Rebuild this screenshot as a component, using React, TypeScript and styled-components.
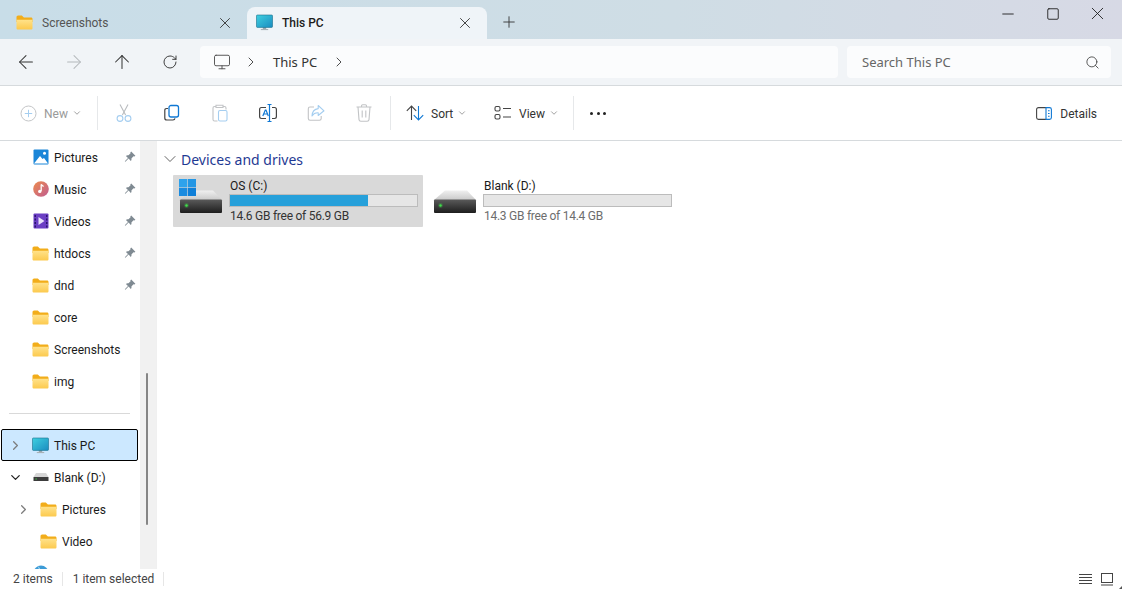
import styled, { createGlobalStyle } from "styled-components";
import { FC, ReactNode } from "react";
import {
  ArrowLeft,
  ArrowRight,
  ArrowUp,
  ChevronDown,
  ChevronRight,
  Minus,
  Monitor,
  Plus,
  RotateCw,
  Search,
  Square,
  X,
} from "lucide-react";

const GlobalStyle = createGlobalStyle`
  html, body {
    margin: 0;
    padding: 0;
    height: 100%;
    background: #fff;
    overflow: hidden;
  }
  body {
    font-family: Roboto, "Noto Sans", "Liberation Sans", sans-serif;
    font-size: 12px;
    color: #1a1a1a;
  }
`;

const FolderIcon: FC = () => (
  <svg width="17" height="15" viewBox="0 0 17 15">
    <path d="M0.5 2.2C0.5 1.3 1.2 0.5 2.1 0.5H5.8L7.9 2.5H15C16 2.5 16.5 3.2 16.5 4V7H0.5Z" fill="#f2ad1a" />
    <path d="M0.5 4.8H16.5V13.2C16.5 14 15.9 14.6 15.1 14.6H1.9C1.1 14.6 0.5 14 0.5 13.2Z" fill="url(#folder-front)" />
  </svg>
);

const MonitorIcon: FC = () => (
  <svg width="17" height="17" viewBox="0 0 17 17">
    <rect x="6.8" y="13" width="3.4" height="2.4" fill="#9aa6ad" />
    <rect x="4.8" y="15" width="7.4" height="1.1" fill="#a8b1b6" />
    <rect x="0.5" y="1" width="16" height="12.4" rx="0.8" fill="url(#monitor-screen)" stroke="#1a6f8c" strokeWidth="0.6" />
  </svg>
);

const PicturesIcon: FC = () => (
  <svg width="16" height="16" viewBox="0 0 16 16">
    <rect x="0.5" y="0.5" width="15" height="15" rx="1" fill="#1b86d8" />
    <circle cx="11.5" cy="4.2" r="1.5" fill="#fff" />
    <path d="M1 14.5L7 7L9.5 10L11 9L15 14.5Z" fill="#fff" />
  </svg>
);

const MusicIcon: FC = () => (
  <svg width="16" height="16" viewBox="0 0 16 16">
    <circle cx="8" cy="8" r="7.8" fill="url(#music-disc)" />
    <path d="M8.2 3.6V10" stroke="#fff" strokeWidth="1.3" fill="none" />
    <path d="M8.2 3.4C9 4.6 10.2 4.8 10.6 5.6" stroke="#fff" strokeWidth="1.2" fill="none" />
    <circle cx="6.8" cy="10.4" r="1.7" fill="#fff" />
  </svg>
);

const VideosIcon: FC = () => (
  <svg width="16" height="16" viewBox="0 0 16 16">
    <rect x="0.5" y="0.5" width="15" height="15" rx="1" fill="#6b3fc4" />
    <path d="M1.5 2H3V4H1.5ZM1.5 5.5H3V7.5H1.5ZM1.5 9H3V11H1.5ZM1.5 12.5H3V14.5H1.5ZM13 2H14.5V4H13ZM13 5.5H14.5V7.5H13ZM13 9H14.5V11H13ZM13 12.5H14.5V14.5H13Z" fill="#2c1570" />
    <path d="M5.5 4L11.5 8L5.5 12Z" fill="#e9e2fb" />
  </svg>
);

const NetworkIcon: FC = () => (
  <svg width="16" height="16" viewBox="0 0 16 16">
    <circle cx="8" cy="8" r="7.5" fill="#3c9bd6" />
    <path d="M5 1.5C6.5 3 7 5 6 8" stroke="#bfe3f7" strokeWidth="1" fill="none" />
  </svg>
);

const SmallDriveIcon: FC = () => (
  <svg width="16" height="10" viewBox="0 0 16 10">
    <path d="M3 1H13L15.5 5H0.5Z" fill="#d6d6d6" />
    <rect x="0.5" y="5" width="15" height="4" fill="#3c3c3c" />
    <rect x="2.5" y="6.5" width="1.2" height="1" fill="#41e04a" />
  </svg>
);

const PinIcon: FC = () => (
  <svg width="12" height="12" viewBox="0 0 12 12">
    <path d="M7.2 0.6L11.4 4.8L10.4 5.6L9.5 5.3L7.4 7.4C7.7 8.4 7.5 9.2 6.8 9.9L4.6 7.6L1.4 10.8L0.8 10.2L4 7L1.9 4.9C2.6 4.2 3.5 4 4.5 4.3L6.6 2.2L6.3 1.4Z" fill="#7f8a92" />
  </svg>
);

const BigDriveIcon: FC<{ windows?: boolean }> = ({ windows }) => (
  <svg width="48" height="48" viewBox="0 0 48 48">
    <path d="M12 13.5H34L43 23H1Z" fill="url(#drive-top)" />
    <rect x="1" y="22.5" width="42" height="13.5" rx="1" fill="url(#drive-front)" />
    <circle cx="7.5" cy="28.5" r="2.4" fill="#3fe04a" opacity="0.25" />
    <circle cx="7.5" cy="28.5" r="1.2" fill="#3fe04a" />
    {windows && (
      <>
        <rect x="0" y="2" width="8.2" height="8.2" fill="#2ea2ec" />
        <rect x="8.8" y="2" width="8.2" height="8.2" fill="#2396e4" />
        <rect x="0" y="10.8" width="8.2" height="8.2" fill="#1a8be0" />
        <rect x="8.8" y="10.8" width="8.2" height="8.2" fill="#0f7fd8" />
      </>
    )}
  </svg>
);

const IconDefs: FC = () => (
  <svg width="0" height="0" style={{ position: "absolute" }}>
    <defs>
      <linearGradient id="folder-front" x1="0" y1="0" x2="0" y2="1">
        <stop offset="0" stopColor="#ffe28a" />
        <stop offset="1" stopColor="#fcc94d" />
      </linearGradient>
      <linearGradient id="monitor-screen" x1="0" y1="0" x2="1" y2="1">
        <stop offset="0" stopColor="#3fd0e0" />
        <stop offset="1" stopColor="#1a8cc0" />
      </linearGradient>
      <linearGradient id="music-disc" x1="0" y1="0" x2="1" y2="1">
        <stop offset="0" stopColor="#ed8b4c" />
        <stop offset="1" stopColor="#c05c92" />
      </linearGradient>
      <linearGradient id="drive-top" x1="0" y1="0" x2="0" y2="1">
        <stop offset="0" stopColor="#f0f0f0" />
        <stop offset="1" stopColor="#c9c9c9" />
      </linearGradient>
      <linearGradient id="drive-front" x1="0" y1="0" x2="0" y2="1">
        <stop offset="0" stopColor="#5a5a5a" />
        <stop offset="1" stopColor="#1d1d1d" />
      </linearGradient>
    </defs>
  </svg>
);

const CmdSvg: FC<{ children: ReactNode }> = ({ children }) => (
  <svg width="20" height="20" viewBox="0 0 20 20" fill="none" strokeWidth="1.1">
    {children}
  </svg>
);

const CutIcon = () => (
  <CmdSvg>
    <path d="M6 1.5L11.6 12M14 1.5L8.4 12" stroke="#b9bcbf" />
    <circle cx="6" cy="15.5" r="2.9" stroke="#a5cef0" />
    <circle cx="14" cy="15.5" r="2.9" stroke="#a5cef0" />
  </CmdSvg>
);

const CopyIcon = () => (
  <CmdSvg>
    <path d="M6 5.5H4.5C3.4 5.5 2.8 6.2 2.8 7.2V15C2.8 16.2 3.6 17 4.8 17H11C12 17 12.8 16.4 13 15.4" stroke="#444" strokeWidth="1.2" />
    <rect x="7" y="2.5" width="9.5" height="11.5" rx="2" stroke="#0f78d4" strokeWidth="1.3" />
  </CmdSvg>
);

const PasteIcon = () => (
  <CmdSvg>
    <path d="M6 3.5H4.5C3.6 3.5 3 4.2 3 5V16.5C3 17.4 3.6 18 4.5 18H7.5M13 3.5H14.5C15.4 3.5 16 4.2 16 5V6.5M6 2.2H13V4.5H6Z" stroke="#c2c4c6" />
    <rect x="8.5" y="7.5" width="8.5" height="10.5" rx="1.5" stroke="#a5cef0" />
  </CmdSvg>
);

const RenameIcon = () => (
  <CmdSvg>
    <path d="M8 4.5H3.5C2.4 4.5 1.6 5.3 1.6 6.4V13.6C1.6 14.7 2.4 15.5 3.5 15.5H8M14 4.5H16.5C17.6 4.5 18.4 5.3 18.4 6.4V13.6C18.4 14.7 17.6 15.5 16.5 15.5H14" stroke="#444" strokeWidth="1.2" />
    <path d="M9.5 1.5H13.5M11.5 1.5V18.5M9.5 18.5H13.5" stroke="#0f78d4" strokeWidth="1.2" />
    <path d="M4.8 13L7.3 7H8L10.3 13M5.8 11H9.5" stroke="#0f78d4" strokeWidth="1.2" />
  </CmdSvg>
);

const ShareIcon = () => (
  <CmdSvg>
    <path d="M8 4H4C3 4 2.3 4.7 2.3 5.7V15.5C2.3 16.5 3 17.2 4 17.2H13.5C14.5 17.2 15.2 16.5 15.2 15.5V13" stroke="#c2c4c6" />
    <path d="M12.2 2.5L18 7.8L12.2 12.5V9.8C9.5 9.6 7.6 10.5 6 13C6.2 9 8.5 6 12.2 5.6Z" stroke="#a5cef0" strokeLinejoin="round" />
  </CmdSvg>
);

const DeleteIcon = () => (
  <CmdSvg>
    <path d="M2.5 4H17.5M7.5 4V2.8C7.5 2.2 8 1.8 8.6 1.8H11.4C12 1.8 12.5 2.2 12.5 2.8V4M4 4L5 16.6C5.1 17.6 5.8 18.2 6.8 18.2H13.2C14.2 18.2 14.9 17.6 15 16.6L16 4M8.2 7.5V14.5M11.8 7.5V14.5" stroke="#c2c4c6" />
  </CmdSvg>
);

const NewIcon = () => (
  <svg width="17" height="17" viewBox="0 0 17 17" fill="none">
    <circle cx="8.5" cy="8.5" r="7.5" stroke="#c4c6c8" />
    <path d="M8.5 4.8V12.2M4.8 8.5H12.2" stroke="#a5cef0" />
  </svg>
);

const SortIcon = () => (
  <CmdSvg>
    <path d="M6.5 17V3M1.8 7.8L6.5 3L11.2 7.8" stroke="#444" />
    <path d="M13.5 3V17M8.8 12.2L13.5 17L18.2 12.2" stroke="#0f78d4" />
  </CmdSvg>
);

const ViewIcon = () => (
  <CmdSvg>
    <rect x="2" y="3.5" width="5" height="4.5" rx="1.5" stroke="#444" />
    <rect x="2" y="11.5" width="5" height="4.5" rx="1.5" stroke="#444" />
    <path d="M10 5.5H18M10 14H18" stroke="#444" />
  </CmdSvg>
);

const DetailsIcon = () => (
  <svg width="16" height="13" viewBox="0 0 16 13" fill="none">
    <path d="M10 0.6H2.5C1.4 0.6 0.6 1.4 0.6 2.5V10.5C0.6 11.6 1.4 12.4 2.5 12.4H10" stroke="#444" strokeWidth="1.1" />
    <path d="M10 0.6H13.5C14.6 0.6 15.4 1.4 15.4 2.5V10.5C15.4 11.6 14.6 12.4 13.5 12.4H10ZM12 3.8H13.6M12 6.5H13.6M12 9.2H13.6" stroke="#0f78d4" strokeWidth="1.1" />
  </svg>
);

const Window = styled.div`
  position: relative;
  width: 1122px;
  height: 589px;
  display: flex;
  flex-direction: column;
  background: #fff;
  overflow: hidden;
`;

const TitleBar = styled.div`
  height: 39px;
  flex: none;
  display: flex;
  align-items: flex-end;
  background: linear-gradient(90deg, #c8dde8 0%, #cfdde5 60%, #d7d9e5 100%);
`;

const Tab = styled.div<{ $active?: boolean }>`
  width: ${(p) => (p.$active ? "240px" : "247px")};
  height: 32px;
  box-sizing: border-box;
  flex: none;
  display: flex;
  align-items: center;
  padding: 0 13px 1px ${(p) => (p.$active ? "9px" : "16px")};
  gap: 9px;
  border-radius: 8px 8px 0 0;
  background: ${(p) => (p.$active ? "#eff4f8" : "transparent")};
  color: ${(p) => (p.$active ? "#1b1b1b" : "#555")};
  font-weight: ${(p) => (p.$active ? 500 : 400)};
`;

const TabLabel = styled.span`
  flex: 1;
`;

const NewTab = styled.div`
  width: 44px;
  height: 32px;
  flex: none;
  display: flex;
  align-items: center;
  justify-content: center;
  padding-bottom: 2px;
  box-sizing: border-box;
  color: #333;
`;

const WindowControls = styled.div`
  margin-left: auto;
  padding-right: 2px;
  align-self: flex-start;
  display: flex;
  color: #1b1b1b;
`;

const WindowButton = styled.div`
  width: 45px;
  height: 27px;
  display: flex;
  align-items: center;
  justify-content: center;
`;

const NavBar = styled.div`
  height: 47px;
  flex: none;
  box-sizing: border-box;
  display: flex;
  align-items: center;
  padding: 0 11px 0 0;
  background: #f1f4f7;
  border-bottom: 1px solid #d6dadd;
`;

const NavButton = styled.div<{ $disabled?: boolean }>`
  width: 48px;
  height: 32px;
  flex: none;
  display: flex;
  align-items: center;
  justify-content: center;
  color: ${(p) => (p.$disabled ? "#b4b8bb" : "#333")};
`;

const NavButtons = styled.div`
  width: 200px;
  flex: none;
  display: flex;
  padding-left: 2px;
  box-sizing: border-box;
`;

const Address = styled.div`
  flex: 1;
  height: 32px;
  display: flex;
  align-items: center;
  padding-left: 13px;
  border-radius: 4px;
  background: #fbfcfd;
  color: #333;
  font-family: "Noto Sans", sans-serif;
  font-size: 13px;
  margin-right: 9px;
  gap: 12px;
`;

const Crumb = styled.span`
  margin: 0 2px;
`;

const SearchBox = styled.div`
  width: 264px;
  height: 32px;
  box-sizing: border-box;
  flex: none;
  display: flex;
  align-items: center;
  justify-content: space-between;
  padding: 0 11px 0 15px;
  border-radius: 4px;
  background: #fbfcfd;
  color: #666;
  font-family: "Noto Sans", sans-serif;
  font-size: 13px;
`;

const CommandBar = styled.div`
  height: 55px;
  flex: none;
  box-sizing: border-box;
  display: flex;
  align-items: center;
  padding: 0 25px 0 20px;
  background: #fff;
  border-bottom: 1px solid #d6dadd;
`;

const CmdDivider = styled.div<{ $left?: number; $right?: number }>`
  width: 1px;
  height: 34px;
  flex: none;
  background: #e6e8ea;
  margin: 0 ${(p) => p.$right ?? 0}px 0 ${(p) => p.$left ?? 0}px;
`;

const IconButton = styled.div`
  width: 48px;
  height: 32px;
  flex: none;
  display: flex;
  align-items: center;
  justify-content: center;
`;

const CmdButton = styled.div<{ $disabled?: boolean; $width?: number }>`
  width: ${(p) => (p.$width ? `${p.$width}px` : "auto")};
  flex: none;
  display: flex;
  align-items: center;
  gap: 6px;
  color: ${(p) => (p.$disabled ? "#9a9a9a" : "#333")};
`;

const CmdLabel = styled.span<{ $nudge?: number }>`
  padding-top: 1px;
  margin-left: ${(p) => p.$nudge ?? 0}px;
`;

const Caret = styled(ChevronDown)`
  color: #8f8f8f;
  margin-left: -2px;
`;

const Dots = styled.div`
  width: 16px;
  margin-left: 16px;
  display: flex;
  justify-content: space-between;

  span {
    width: 3px;
    height: 3px;
    border-radius: 50%;
    background: #222;
  }
`;

const DetailsButton = styled(CmdButton)`
  margin-left: auto;
  gap: 8px;
`;

const Body = styled.div`
  flex: 1;
  min-height: 0;
  display: flex;
`;

const Sidebar = styled.nav`
  width: 157px;
  flex: none;
  display: flex;
  border-right: 1px solid #f0f0f0;
  box-sizing: border-box;
  overflow: hidden;
`;

const TreeList = styled.div`
  width: 140px;
  flex: none;
  display: flex;
  flex-direction: column;
`;

const Row = styled.div<{ $indent: number; $selected?: boolean }>`
  height: 32px;
  flex: none;
  box-sizing: border-box;
  display: flex;
  align-items: center;
  padding-left: ${(p) => p.$indent}px;
  padding-right: 1px;
  margin: 0 2px 0 1px;
  gap: 5px;
  border-radius: 2px;
  color: #1a1a1a;
  background: ${(p) => (p.$selected ? "#cce8ff" : "transparent")};
  border: 1px solid ${(p) => (p.$selected ? "#000" : "transparent")};
`;

const Twisty = styled.span<{ $dark?: boolean }>`
  width: 16px;
  flex: none;
  display: flex;
  justify-content: center;
  color: ${(p) => (p.$dark ? "#222" : "#7d7d7d")};
`;

const RowIcon = styled.span<{ $offset?: number }>`
  width: 17px;
  flex: none;
  display: flex;
  align-items: center;
  justify-content: center;
  margin-left: ${(p) => p.$offset ?? 0}px;
`;

const RowLabel = styled.span`
  flex: 1;
  padding-top: 1px;
  white-space: nowrap;
`;

const TreeDivider = styled.div`
  height: 32px;
  flex: none;
  display: flex;
  align-items: center;
  padding: 0 10px 0 9px;

  &::after {
    content: "";
    flex: 1;
    height: 1px;
    background: #d9d9d9;
  }
`;

const ScrollRail = styled.div`
  width: 16px;
  flex: none;
  box-sizing: border-box;
  padding-left: 6px;
  background: #f1f1f1;
`;

const ScrollThumb = styled.div`
  width: 2px;
  height: 152px;
  margin-top: 232px;
  border-radius: 1px;
  background: #858585;
`;

const Content = styled.main`
  flex: 1;
  padding: 8px 16px;
  box-sizing: border-box;
`;

const GroupHeader = styled.div`
  height: 20px;
  display: flex;
  align-items: center;
  gap: 1px;
  margin-left: -13px;
  color: #1f3a93;
  font-family: "Noto Sans", sans-serif;
  font-size: 14px;
  margin-bottom: 6px;
`;

const DriveGrid = styled.div`
  display: flex;
  gap: 4px;
`;

const DriveTile = styled.div<{ $selected?: boolean }>`
  width: 250px;
  height: 52px;
  flex: none;
  box-sizing: border-box;
  display: flex;
  align-items: center;
  gap: 3px;
  padding: 0 5px 0 6px;
  border-radius: 1px;
  background: ${(p) => (p.$selected ? "#d9d9d9" : "transparent")};
`;

const DriveInfo = styled.div`
  flex: 1;
  display: flex;
  flex-direction: column;
`;

const DriveName = styled.div`
  line-height: 16px;
  color: #1a1a1a;
`;

const UsageTrack = styled.div`
  height: 13px;
  margin-left: -1px;
  box-sizing: border-box;
  border: 1px solid #bcbcbc;
  background: #e6e6e6;
`;

const UsageFill = styled.div`
  height: 100%;
  background: #26a0da;
`;

const DriveFree = styled.div<{ $selected?: boolean }>`
  line-height: 17px;
  margin-top: 1px;
  letter-spacing: -0.26px;
  color: ${(p) => (p.$selected ? "#333" : "#6d6d6d")};
`;

const StatusBar = styled.footer`
  height: 20px;
  flex: none;
  display: flex;
  align-items: center;
  padding: 0 9px 0 13px;
  background: #fff;
  color: #444;
`;

const StatusItem = styled.span`
  padding-right: 9px;
  margin-right: 10px;
  border-right: 1px solid #e6e6e6;
  line-height: 14px;
`;

const ViewToggles = styled.div`
  margin-left: auto;
  display: flex;
  gap: 9px;
`;

const ResizeGrip = styled.div`
  position: absolute;
  right: 0;
  bottom: 0;
  border-style: solid;
  border-width: 0 0 3px 3px;
  border-color: transparent transparent #555 transparent;
`;

const items = [
  { label: "Pictures", icon: <PicturesIcon />, pinned: true },
  { label: "Music", icon: <MusicIcon />, pinned: true },
  { label: "Videos", icon: <VideosIcon />, pinned: true },
  { label: "htdocs", icon: <FolderIcon />, pinned: true },
  { label: "dnd", icon: <FolderIcon />, pinned: true },
  { label: "core", icon: <FolderIcon /> },
  { label: "Screenshots", icon: <FolderIcon /> },
  { label: "img", icon: <FolderIcon /> },
];

const Drive: FC<{
  name: string;
  free: string;
  used: number;
  selected?: boolean;
  windows?: boolean;
}> = ({ name, free, used, selected, windows }) => (
  <DriveTile $selected={selected}>
    <BigDriveIcon windows={windows} />
    <DriveInfo>
      <DriveName>{name}</DriveName>
      <UsageTrack>
        <UsageFill style={{ width: `${used}%` }} />
      </UsageTrack>
      <DriveFree $selected={selected}>{free}</DriveFree>
    </DriveInfo>
  </DriveTile>
);

export default function App() {
  return (
    <Window>
      <GlobalStyle />
      <IconDefs />
      <TitleBar>
        <Tab>
          <FolderIcon />
          <TabLabel>Screenshots</TabLabel>
          <X size={18} strokeWidth={1.2} color="#333" />
        </Tab>
        <Tab $active>
          <MonitorIcon />
          <TabLabel>This PC</TabLabel>
          <X size={18} strokeWidth={1.2} color="#333" />
        </Tab>
        <NewTab>
          <Plus size={18} strokeWidth={1.2} />
        </NewTab>
        <WindowControls>
          <WindowButton>
            <Minus size={18} strokeWidth={1.2} />
          </WindowButton>
          <WindowButton>
            <Square size={14} strokeWidth={1.5} />
          </WindowButton>
          <WindowButton>
            <X size={21} strokeWidth={1} />
          </WindowButton>
        </WindowControls>
      </TitleBar>

      <NavBar>
        <NavButtons>
          <NavButton>
            <ArrowLeft size={22} strokeWidth={1.1} />
          </NavButton>
          <NavButton $disabled>
            <ArrowRight size={22} strokeWidth={1.1} />
          </NavButton>
          <NavButton>
            <ArrowUp size={22} strokeWidth={1.1} />
          </NavButton>
          <NavButton>
            <RotateCw size={16} strokeWidth={1.4} />
          </NavButton>
        </NavButtons>
        <Address>
          <Monitor size={18} strokeWidth={1.3} color="#555" />
          <ChevronRight size={16} strokeWidth={1.3} />
          <Crumb>This PC</Crumb>
          <ChevronRight size={16} strokeWidth={1.3} />
        </Address>
        <SearchBox>
          Search This PC
          <Search size={15} strokeWidth={1.4} color="#444" />
        </SearchBox>
      </NavBar>

      <CommandBar>
        <CmdButton $disabled $width={77}>
          <NewIcon />
          <CmdLabel $nudge={1}>New</CmdLabel>
          <Caret size={10} />
        </CmdButton>
        <CmdDivider $right={2} />
        <IconButton>
          <CutIcon />
        </IconButton>
        <IconButton>
          <CopyIcon />
        </IconButton>
        <IconButton>
          <PasteIcon />
        </IconButton>
        <IconButton>
          <RenameIcon />
        </IconButton>
        <IconButton>
          <ShareIcon />
        </IconButton>
        <IconButton>
          <DeleteIcon />
        </IconButton>
        <CmdDivider $left={2} $right={14} />
        <CmdButton $width={88}>
          <SortIcon />
          <CmdLabel>Sort</CmdLabel>
          <Caret size={10} />
        </CmdButton>
        <CmdButton $width={80}>
          <ViewIcon />
          <CmdLabel>View</CmdLabel>
          <Caret size={10} />
        </CmdButton>
        <CmdDivider />
        <Dots>
          <span />
          <span />
          <span />
        </Dots>
        <DetailsButton>
          <DetailsIcon />
          <CmdLabel>Details</CmdLabel>
        </DetailsButton>
      </CommandBar>

      <Body>
        <Sidebar>
          <TreeList>
            {items.map((item) => (
              <Row key={item.label} $indent={30}>
                <RowIcon>{item.icon}</RowIcon>
                <RowLabel>{item.label}</RowLabel>
                {item.pinned && <PinIcon />}
              </Row>
            ))}
            <TreeDivider />
            <Row $indent={5} $selected>
              <Twisty>
                <ChevronRight size={15} strokeWidth={2} />
              </Twisty>
              <RowIcon $offset={4}>
                <MonitorIcon />
              </RowIcon>
              <RowLabel>This PC</RowLabel>
            </Row>
            <Row $indent={5}>
              <Twisty $dark>
                <ChevronDown size={15} strokeWidth={2} />
              </Twisty>
              <RowIcon $offset={4}>
                <SmallDriveIcon />
              </RowIcon>
              <RowLabel>Blank (D:)</RowLabel>
            </Row>
            <Row $indent={13}>
              <Twisty>
                <ChevronRight size={15} strokeWidth={2} />
              </Twisty>
              <RowIcon $offset={4}>
                <FolderIcon />
              </RowIcon>
              <RowLabel>Pictures</RowLabel>
            </Row>
            <Row $indent={38}>
              <RowIcon>
                <FolderIcon />
              </RowIcon>
              <RowLabel>Video</RowLabel>
            </Row>
            <Row $indent={30}>
              <RowIcon>
                <NetworkIcon />
              </RowIcon>
            </Row>
          </TreeList>
          <ScrollRail>
            <ScrollThumb />
          </ScrollRail>
        </Sidebar>
        <Content>
          <GroupHeader>
            <ChevronDown size={20} strokeWidth={1.1} color="#555" />
            Devices and drives
          </GroupHeader>
          <DriveGrid>
            <Drive name="OS (C:)" free="14.6 GB free of 56.9 GB" used={73.8} selected windows />
            <Drive name="Blank (D:)" free="14.3 GB free of 14.4 GB" used={0} />
          </DriveGrid>
        </Content>
      </Body>

      <StatusBar>
        <StatusItem>2 items</StatusItem>
        <StatusItem>1 item selected</StatusItem>
        <ViewToggles>
          <svg width="13" height="12" viewBox="0 0 13 12" fill="none" stroke="#444">
            <path d="M0 1.5H13M0 4.5H13M0 7.5H13M0 10.5H13" />
          </svg>
          <svg width="12" height="13" viewBox="0 0 12 13" fill="none" stroke="#444">
            <rect x="0.5" y="0.5" width="11" height="9" />
            <path d="M0 12H12" />
          </svg>
        </ViewToggles>
      </StatusBar>
      <ResizeGrip />
    </Window>
  );
}
